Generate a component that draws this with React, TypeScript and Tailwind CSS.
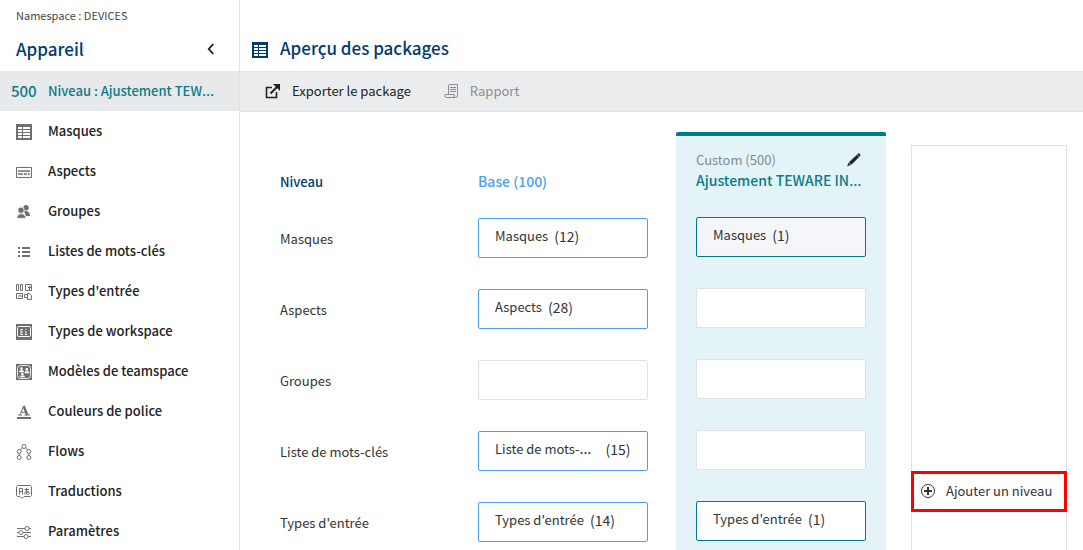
import type { ReactNode } from 'react';

type Entry = { name: string; count: number; clipped?: boolean } | null;

const LEVEL_ROWS = ['Masques', 'Aspects', 'Groupes', 'Liste de mots-clés', "Types d'entrée"];

const BASE_ENTRIES: Entry[] = [
  { name: 'Masques', count: 12 },
  { name: 'Aspects', count: 28 },
  null,
  { name: 'Liste de mots-', count: 15, clipped: true },
  { name: "Types d'entrée", count: 14 },
];

const CUSTOM_ENTRIES: Entry[] = [
  { name: 'Masques', count: 1 },
  null,
  null,
  null,
  { name: "Types d'entrée", count: 1 },
];

// The CJK family centres its ellipsis vertically, so the dots come from another font.
function Ellipsis() {
  return <span className="font-['Noto_Sans',sans-serif] text-[15px] leading-none">…</span>;
}

function Icon({ children, className = 'size-4' }: { children: ReactNode; className?: string }) {
  return (
    <svg viewBox="0 0 16 16" fill="none" stroke="currentColor" className={`shrink-0 ${className}`} aria-hidden="true">
      {children}
    </svg>
  );
}

function TableIcon() {
  return (
    <Icon>
      <path
        fill="currentColor"
        stroke="none"
        fillRule="evenodd"
        d="M0 0h16v16H0zM2 3v2h4V3zM7 3v2h7V3zM2 6v2h4V6zM7 6v2h7V6zM2 9v2h4V9zM7 9v2h7V9zM2 12v2h4v-2zM7 12v2h7v-2z"
      />
    </Icon>
  );
}

const NAV_ITEMS: { label: string; icon: ReactNode }[] = [
  { label: 'Masques', icon: <TableIcon /> },
  {
    label: 'Aspects',
    icon: (
      <Icon>
        <path d="M.5 3.5h15v10H.5z" />
        <path d="M2 7h12M2 10h5M8 10h3M12 10h2" strokeWidth="1.5" />
      </Icon>
    ),
  },
  {
    label: 'Groupes',
    icon: (
      <Icon>
        <g fill="currentColor" stroke="none">
          <circle cx="10" cy="3.8" r="2.7" />
          <path d="M8 7.2c3.2-1 5.7.5 6 4.8h-4z" />
          <circle cx="5" cy="6.2" r="3.2" stroke="white" strokeWidth=".8" />
          <path d="M.8 14.3c0-6 9-6 9 0z" stroke="white" strokeWidth=".6" />
        </g>
      </Icon>
    ),
  },
  {
    label: 'Listes de mots-clés',
    icon: (
      <Icon>
        <path d="M2 4h2M6 4h8M2 8h2M6 8h8M2 12h2M6 12h8" strokeWidth="2" />
      </Icon>
    ),
  },
  {
    label: "Types d'entrée",
    icon: (
      <Icon>
        <path d="M.5.5h2v6h-2zM4.5.5h2v6h-2zM9.5.5h6v6h-6zM12 3.5h3M13.5 2v4M.5 9.5h6v5h-6zM2 12.5l2-1 2 1M11.5 9.5h2l2 2v4h-4zM11 13.5H8.5v-3h3" />
      </Icon>
    ),
  },
  {
    label: 'Types de workspace',
    icon: (
      <Icon>
        <path d="M0 0h16v16H0z" fill="currentColor" stroke="none" />
        <rect x="1.5" y="2.5" width="13" height="10" rx="1" stroke="white" />
        <path
          d="M5 5v6M5 5.5h2M5 8h2M5 10.5h2M10 7.5V11M9 7.5h1M9 10.5h2M10 4.8V6"
          stroke="white"
          strokeWidth=".9"
        />
      </Icon>
    ),
  },
  {
    label: 'Modèles de teamspace',
    icon: (
      <Icon>
        <path d="M0 0h16v16H0z" fill="currentColor" stroke="none" />
        <rect x="1.5" y="1.5" width="13" height="13" rx="3" stroke="white" strokeWidth=".9" />
        <g fill="white" stroke="none">
          <circle cx="5.5" cy="4.6" r="1.3" />
          <path d="M3 8.3c0-3 5-3 5 0z" />
          <circle cx="10.8" cy="5.4" r="1.3" />
          <path d="M8.4 9.2c0-3 5-3 5 0z" />
          <circle cx="6.4" cy="10" r="1.2" />
          <path d="M4 13.3c0-2.7 5-2.7 5 0z" />
        </g>
      </Icon>
    ),
  },
  {
    label: 'Couleurs de police',
    icon: (
      <Icon>
        <path d="M1 14h14" strokeWidth="2" />
        <path d="M4 11 7.5 2.5M5.3 8.3h4.5M2 11h4M8.5 11H14" />
        <path d="m7.7 2 3.6 9" strokeWidth="2.4" />
      </Icon>
    ),
  },
  {
    label: 'Flows',
    icon: (
      <Icon>
        <circle cx="8" cy="2.5" r="2" />
        <circle cx="3.2" cy="7.5" r="2" />
        <circle cx="12.8" cy="7.5" r="2" />
        <circle cx="3.2" cy="13.5" r="2" />
        <circle cx="12.8" cy="13.5" r="2" />
        <path d="M6.3 3.5 4.3 5.8M9.7 3.5l2 2.3M3.2 9.5v2M12.8 9.5v2" />
      </Icon>
    ),
  },
  {
    label: 'Traductions',
    icon: (
      <Icon>
        <path d="M1.5 1.5h13l1 1v9l-1 1H8l-2 2-2-2H1.5l-1-1v-9z" />
        <path d="M3.5 10.5v-6h3v6M3.5 7.5h3M8.5 5.5H13M10.5 4v5.5M12.5 7c-1 3-3.5 4-4 2.5S12 6.5 13 8.5s-.5 2-1.5 2" />
      </Icon>
    ),
  },
  {
    label: 'Paramètres',
    icon: (
      <Icon>
        <path d="M1 4.5h8M13 4.5h2M1 8.5h2M7 8.5h8M1 12.5h7M12 12.5h3" />
        <circle cx="11" cy="4.5" r="2" />
        <circle cx="5" cy="8.5" r="2" />
        <circle cx="10" cy="12.5" r="2" />
      </Icon>
    ),
  },
];

function Sidebar() {
  return (
    <aside className="w-60 shrink-0 border-r border-[#e3e4e6]">
      <p className="h-7 px-4 pt-[3px] text-[11px] leading-6 text-[#444]">Namespace : DEVICES</p>
      <div className="flex h-[43px] items-center justify-between pr-[22px] pb-0.5 pl-4">
        <h2 className="text-[17px] font-medium text-[#003a6f]">Appareil</h2>
        <button type="button" aria-label="Réduire" className="text-[#222]">
          <Icon className="size-3">
            <path d="M11 1.5 5 8l6 6.5" strokeWidth="2.4" />
          </Icon>
        </button>
      </div>
      <nav>
        <a href="#niveau" className="flex h-10 items-center bg-[#e7e9eb] text-[13px] font-medium text-[#0b7c87]">
          <span className="w-12 shrink-0 pl-[11px] text-[15px]">500</span>
          <span className="whitespace-nowrap">
            Niveau : Ajustement TEW
            <Ellipsis />
          </span>
        </a>
        {NAV_ITEMS.map((item) => (
          <a
            key={item.label}
            href="#"
            className="flex h-10 items-center gap-4 px-4 text-[13px] font-medium text-[#222]"
          >
            <span className="pt-0.5 text-[#6e6f73]">{item.icon}</span>
            {item.label}
          </a>
        ))}
      </nav>
    </aside>
  );
}

function EntryBox({ entry, className }: { entry: Entry; className: string }) {
  if (!entry) {
    return <div className="h-10 rounded-xs border border-[#dfe1e2] bg-white" />;
  }
  return (
    <button
      type="button"
      className={`flex h-10 w-full items-center rounded-xs border pb-1 pl-4 text-left whitespace-nowrap text-[#333] ${
        entry.clipped ? 'gap-3.5' : 'gap-1.5'
      } ${className}`}
    >
      <span className="text-[13px]">
        {entry.name}
        {entry.clipped && <Ellipsis />}
      </span>
      <span className="text-sm">({entry.count})</span>
    </button>
  );
}

export default function App() {
  return (
    <div className="flex h-screen overflow-hidden bg-white font-['Noto_Sans_CJK_KR','Noto_Sans',sans-serif] text-[#333]">
      <Sidebar />
      <main className="min-w-0 flex-1">
        <header className="flex h-[71px] items-end gap-3 pb-[13px] pl-3 text-[#003a6f]">
          <TableIcon />
          <h1 className="text-[17px] leading-5 font-medium">Aperçu des packages</h1>
        </header>
        <div className="flex h-[41px] items-center gap-[33px] border-y border-[#e3e4e6] bg-[#ebecee] pb-px pl-[25px] text-[13px]">
          <button type="button" className="flex items-center gap-[11px] text-[#222]">
            <Icon>
              <path d="M7 4.5H1.5v10h10V9" strokeWidth="1.6" />
              <path d="M5.5 10.5 13 3" strokeWidth="2" />
              <path d="M8 1h7v7z" fill="currentColor" stroke="none" />
            </Icon>
            Exporter le package
          </button>
          <button type="button" disabled className="flex items-center gap-2.5 text-[#8c8d90]">
            <Icon>
              <path d="M4.5 11V3a1.5 1.5 0 0 1 1.5-1.5h7.5v11a2 2 0 0 1-2 2h-9A1.5 1.5 0 0 1 1 13v-1.5h9V13a1.5 1.5 0 0 0 1.5 1.5" />
              <path d="M6 4.5h6M6 6.5h6M6 8.5h6" />
            </Icon>
            Rapport
          </button>
        </div>

        <div className="flex pt-5 pl-10">
          <div className="w-[198px] shrink-0 text-[13px]">
            <h3 className="pt-10 leading-5 font-medium text-[#003a6f]">Niveau</h3>
            <ul className="space-y-[31px] pt-[27px]">
              {LEVEL_ROWS.map((row) => (
                <li key={row} className="h-10 leading-10">
                  {row}
                </li>
              ))}
            </ul>
          </div>

          <div className="w-[170px] shrink-0">
            <h3 className="pt-[39px] text-sm leading-5 font-medium text-[#4a9ff0]">Base (100)</h3>
            <div className="space-y-[31px] pt-[27px]">
              {BASE_ENTRIES.map((entry, i) => (
                <EntryBox key={i} entry={entry} className="border-[#4a9ff0] bg-white" />
              ))}
            </div>
          </div>

          <section className="ml-7 w-[210px] shrink-0 rounded-t-xs border-t-4 border-[#007c85] bg-[#e3f3f7] px-5">
            <div className="flex items-center justify-between pt-3.5 text-[13px] leading-5">
              <span className="text-[#85898c]">Custom (500)</span>
              <button type="button" aria-label="Modifier" className="pr-1 text-[#222]">
                <Icon>
                  <path
                    d="M1.5 14l1.2-3.2 1.9 1.9zM3.2 10.2l7.6-7.2 2.1 2.1-7.5 7.3zM11.3 2.6l1-.9c.8-.6 2.4.9 1.8 1.8l-.8 1.1z"
                    fill="currentColor"
                    stroke="currentColor"
                    strokeWidth=".4"
                  />
                </Icon>
              </button>
            </div>
            <h3 className="text-sm leading-5 font-medium whitespace-nowrap text-[#0b7c87]">
              Ajustement TEWARE IN
              <Ellipsis />
            </h3>
            <div className="space-y-[31px] pt-[27px]">
              {CUSTOM_ENTRIES.map((entry, i) => (
                <EntryBox
                  key={i}
                  entry={entry}
                  className={i === 0 ? 'border-[#007c85] bg-[#f5f6f9]' : 'border-[#007c85] bg-white'}
                />
              ))}
            </div>
          </section>

          <div className="mt-[13px] mr-4 ml-[25px] flex h-[692px] min-w-[156px] flex-1 flex-col justify-center border border-[#e1e1e1]">
            <button
              type="button"
              className="-mx-px flex h-[41px] items-center gap-2.5 border-3 border-[#f00] pb-px pl-1.5 text-[13px] whitespace-nowrap text-[#333]"
            >
              <Icon>
                <circle cx="8" cy="8" r="6.5" />
                <path d="M8 4v8M4 8h8" strokeWidth="2" />
              </Icon>
              Ajouter un niveau
            </button>
          </div>
        </div>
      </main>
    </div>
  );
}
